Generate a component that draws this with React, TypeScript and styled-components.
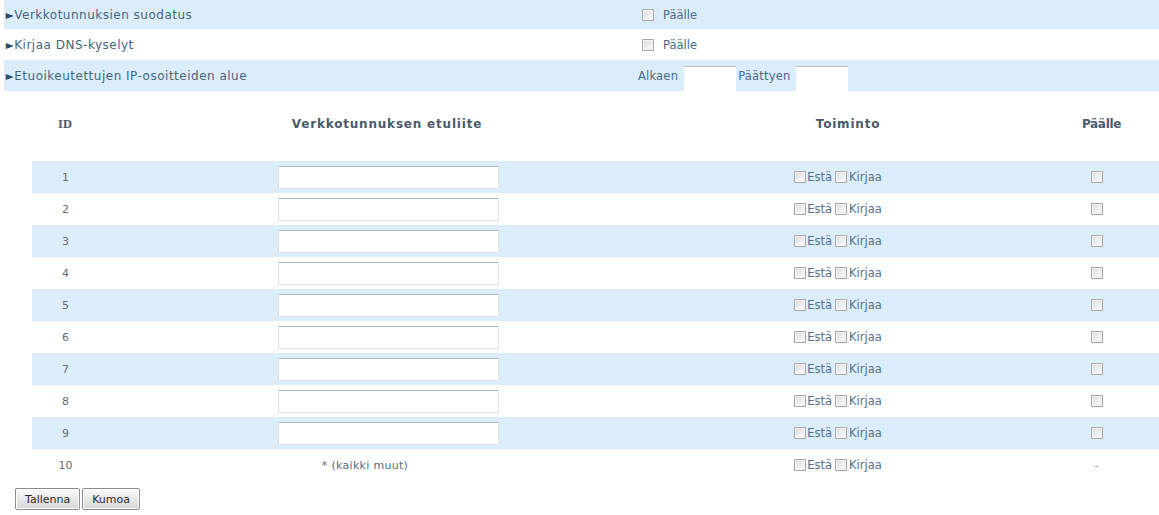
import React from "react";
import styled, { createGlobalStyle } from "styled-components";

const GlobalStyle = createGlobalStyle`
  html, body {
    margin: 0;
    padding: 0;
    background: #ffffff;
  }
  body {
    font-family: "DejaVu Sans", Verdana, sans-serif;
    font-size: 11px;
    color: #3d5f80;
    overflow: hidden;
  }
`;

const Page = styled.div`
  width: 1159px;
  display: flex;
  flex-direction: column;
`;

const SettingsList = styled.div`
  display: flex;
  flex-direction: column;
  margin-left: 4px;
`;

const SettingRow = styled.div<{ $shaded?: boolean; $h: number }>`
  display: grid;
  grid-template-columns: 634px 1fr;
  align-items: center;
  height: ${(p) => p.$h}px;
  background: ${(p) => (p.$shaded ? "#dbedfb" : "#ffffff")};
`;

const SettingLabel = styled.div`
  display: flex;
  align-items: center;
  font-size: 12px;
  letter-spacing: 0.5px;
  color: #45657f;
  white-space: nowrap;
`;

const Arrow = styled.span`
  font-size: 12px;
  line-height: 1;
  color: #2d4a66;
  margin: 0 0 0 1px;
  letter-spacing: 0;
  transform: scaleX(0.85);
`;

const SettingValue = styled.div`
  display: flex;
  align-items: center;
  font-size: 11.5px;
  color: #4a6b8b;
  white-space: nowrap;
`;

const Check = styled.input.attrs({ type: "checkbox" })<{ $gap?: number }>`
  appearance: none;
  -webkit-appearance: none;
  width: 12px;
  height: 12px;
  margin: 0 ${(p) => p.$gap ?? 2}px 0 0;
  box-sizing: border-box;
  border: 1px solid #a9a9a9;
  background: linear-gradient(135deg, #d8d8d8 0%, #eeeeee 55%, #fbfbfb 100%);
  box-shadow: inset 0 0 0 1px #f4f4f4;
  flex: none;
`;

const RangeField = styled.input.attrs({ type: "text" })`
  width: 52px;
  height: 25px;
  box-sizing: border-box;
  border: none;
  border-top: 1px solid #bdbdbd;
  background: #ffffff;
  margin: 5px 2px 0 6px;
  padding: 0;
  align-self: flex-end;
`;

const RangeLabel = styled.span`
  letter-spacing: 0.2px;
`;

const RuleTable = styled.div`
  margin-left: 32px;
  display: flex;
  flex-direction: column;
`;

const Columns = "66px 578px 344px 1fr";

const HeaderRow = styled.div`
  display: grid;
  grid-template-columns: ${Columns};
  height: 70px;
  align-items: start;
  padding-top: 26px;
  box-sizing: border-box;
`;

const HeadCell = styled.div<{ $serif?: boolean; $shift?: number; $spacing?: number }>`
  text-align: center;
  font-family: ${(p) =>
    p.$serif ? '"Liberation Serif", "Times New Roman", serif' : '"DejaVu Sans", Verdana, sans-serif'};
  font-weight: bold;
  font-size: ${(p) => (p.$serif ? 12.5 : 12)}px;
  letter-spacing: ${(p) => p.$spacing ?? 0}px;
  color: #4a5a6d;
  padding-left: ${(p) => p.$shift ?? 0}px;
`;

const DataRow = styled.div<{ $shaded?: boolean }>`
  display: grid;
  grid-template-columns: ${Columns};
  align-items: center;
  height: 32px;
  background: ${(p) => (p.$shaded ? "#dbedfb" : "#ffffff")};
`;

const IdCell = styled.div`
  text-align: center;
  font-size: 11px;
  color: #6a6a6a;
  padding-left: 1px;
`;

const PrefixCell = styled.div`
  display: flex;
  justify-content: center;
  padding-left: 2px;
  font-size: 11px;
  color: #5a6d80;
`;

const PrefixField = styled.input.attrs({ type: "text" })`
  width: 221px;
  height: 23px;
  box-sizing: border-box;
  border: 1px solid #e2e2e2;
  border-top: 1px solid #b8b8b8;
  background: #ffffff;
  margin: 0;
  padding: 0 3px;
`;

const CatchAll = styled.span`
  margin-right: 46px;
  letter-spacing: 0.3px;
`;

const ActionCell = styled.div`
  display: flex;
  justify-content: center;
  align-items: center;
  padding-right: 20px;
  font-size: 11.5px;
  color: #54728f;
`;

const ActionLabel = styled.span<{ $mr?: number }>`
  margin-right: ${(p) => p.$mr ?? 0}px;
`;

const EnableCell = styled.div`
  display: flex;
  justify-content: center;
  padding-left: 14px;
  color: #8a8a8a;
`;

const ButtonBar = styled.div`
  display: flex;
  gap: 2px;
  margin: 7px 0 0 15px;
`;

const Button = styled.button`
  height: 22px;
  padding: 0 9px;
  font-family: "DejaVu Sans", Verdana, sans-serif;
  font-size: 11px;
  color: #2a2a2a;
  border: 1px solid #8c8c8c;
  border-radius: 2px;
  background: linear-gradient(#fafafa 0%, #e9e9e9 50%, #d6d6d6 100%);
  box-shadow: inset 0 0 0 1px #ffffff;
`;

const ids = [1, 2, 3, 4, 5, 6, 7, 8, 9];

function ActionChoices() {
  return (
    <ActionCell>
      <Check $gap={1} />
      <ActionLabel $mr={3}>Estä</ActionLabel>
      <Check $gap={2} />
      <ActionLabel>Kirjaa</ActionLabel>
    </ActionCell>
  );
}

export default function App() {
  return (
    <Page>
      <GlobalStyle />
      <SettingsList>
        <SettingRow $shaded $h={29}>
          <SettingLabel>
            <Arrow>►</Arrow>Verkkotunnuksien suodatus
          </SettingLabel>
          <SettingValue>
            <Check $gap={9} style={{ marginLeft: 4 }} />
            Päälle
          </SettingValue>
        </SettingRow>
        <SettingRow $h={31}>
          <SettingLabel>
            <Arrow>►</Arrow>Kirjaa DNS-kyselyt
          </SettingLabel>
          <SettingValue>
            <Check $gap={9} style={{ marginLeft: 4 }} />
            Päälle
          </SettingValue>
        </SettingRow>
        <SettingRow $shaded $h={31}>
          <SettingLabel>
            <Arrow>►</Arrow>Etuoikeutettujen IP-osoitteiden alue
          </SettingLabel>
          <SettingValue>
            <RangeLabel>Alkaen</RangeLabel>
            <RangeField />
            <RangeLabel>Päättyen</RangeLabel>
            <RangeField />
          </SettingValue>
        </SettingRow>
      </SettingsList>

      <RuleTable>
        <HeaderRow>
          <HeadCell $serif>ID</HeadCell>
          <HeadCell $spacing={0.8}>Verkkotunnuksen etuliite</HeadCell>
          <HeadCell $spacing={0.8}>Toiminto</HeadCell>
          <HeadCell $shift={24} $spacing={-0.3}>Päälle</HeadCell>
        </HeaderRow>
        {ids.map((id) => (
          <DataRow key={id} $shaded={id % 2 === 1}>
            <IdCell>{id}</IdCell>
            <PrefixCell>
              <PrefixField />
            </PrefixCell>
            <ActionChoices />
            <EnableCell>
              <Check $gap={0} />
            </EnableCell>
          </DataRow>
        ))}
        <DataRow>
          <IdCell>10</IdCell>
          <PrefixCell>
            <CatchAll>* (kaikki muut)</CatchAll>
          </PrefixCell>
          <ActionChoices />
          <EnableCell>-</EnableCell>
        </DataRow>
      </RuleTable>

      <ButtonBar>
        <Button>Tallenna</Button>
        <Button>Kumoa</Button>
      </ButtonBar>
    </Page>
  );
}
